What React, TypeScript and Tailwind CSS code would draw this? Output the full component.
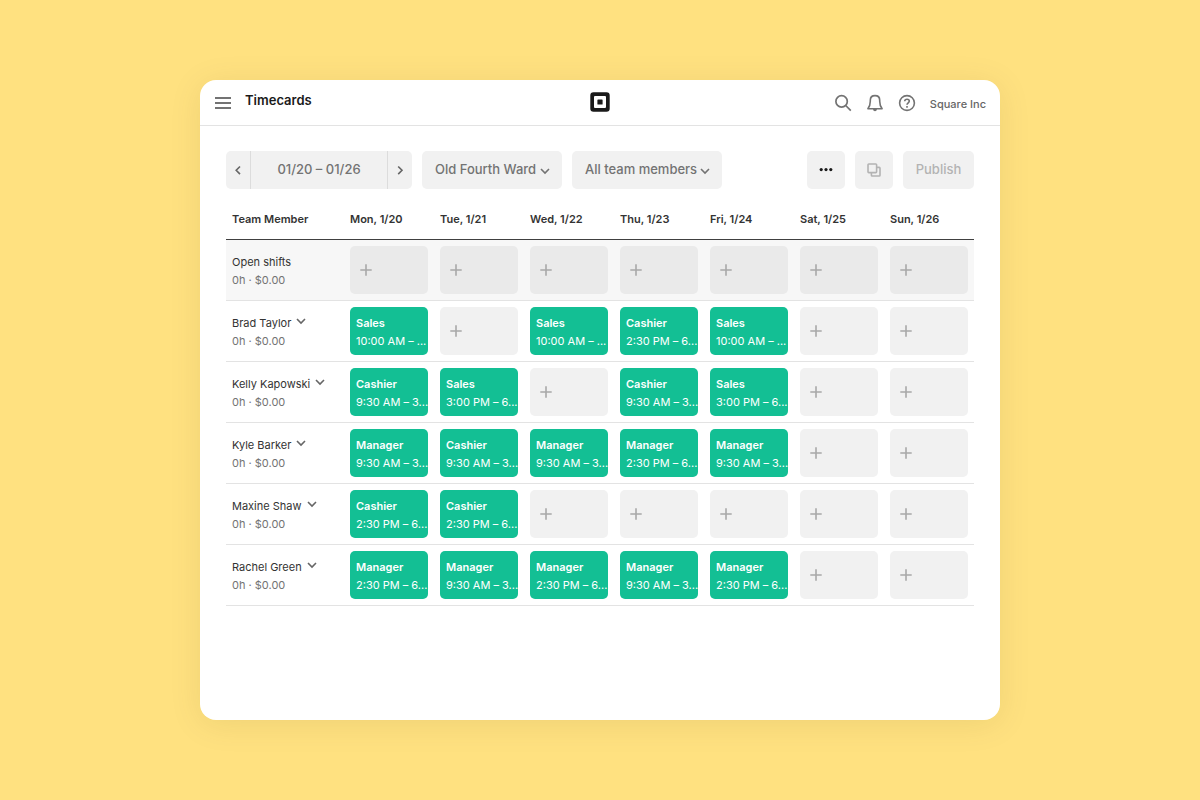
import type { ReactNode } from 'react';

type Cell = [role: string, time: string] | null;

const days = ['Mon, 1/20', 'Tue, 1/21', 'Wed, 1/22', 'Thu, 1/23', 'Fri, 1/24', 'Sat, 1/25', 'Sun, 1/26'];

const ten = '10:00 AM – ...';
const nineThirty = '9:30 AM – 3...';
const twoThirty = '2:30 PM – 6...';
const three = '3:00 PM – 6...';

const members: { name: string; cells: Cell[] }[] = [
  { name: 'Brad Taylor', cells: [['Sales', ten], null, ['Sales', ten], ['Cashier', twoThirty], ['Sales', ten], null, null] },
  { name: 'Kelly Kapowski', cells: [['Cashier', nineThirty], ['Sales', three], null, ['Cashier', nineThirty], ['Sales', three], null, null] },
  { name: 'Kyle Barker', cells: [['Manager', nineThirty], ['Cashier', nineThirty], ['Manager', nineThirty], ['Manager', twoThirty], ['Manager', nineThirty], null, null] },
  { name: 'Maxine Shaw', cells: [['Cashier', twoThirty], ['Cashier', twoThirty], null, null, null, null, null] },
  { name: 'Rachel Green', cells: [['Manager', twoThirty], ['Manager', nineThirty], ['Manager', twoThirty], ['Manager', nineThirty], ['Manager', twoThirty], null, null] },
];

function Chevron({ className, d = 'M1 3 L5 7 L9 3' }: { className?: string; d?: string }) {
  return (
    <svg viewBox="0 0 10 10" className={className} fill="none" stroke="currentColor" strokeWidth="1.6" aria-hidden="true">
      <path d={d} />
    </svg>
  );
}

function Dropdown({ label, value, width }: { label: string; value: string; width: string }) {
  return (
    <div className={`relative ${width}`}>
      <select
        aria-label={label}
        className="h-[38px] w-full appearance-none rounded-[5px] bg-[#f1f1f1] pr-6 pl-[13px] text-[13px] font-medium text-[#737373]"
      >
        <option>{value}</option>
      </select>
      <Chevron className="pointer-events-none absolute top-[15px] right-3 size-[10px] text-[#737373]" />
    </div>
  );
}

function AddShift({ label, tone }: { label: string; tone: string }) {
  return (
    <button type="button" aria-label={label} className={`flex h-12 w-full items-center rounded-[5px] pl-[10px] ${tone}`}>
      <svg viewBox="0 0 12 12" className="size-3" stroke="#a8a8a8" strokeWidth="1.6" aria-hidden="true">
        <path d="M6 .3V11.7M.3 6H11.7" />
      </svg>
    </button>
  );
}

function Shift({ role, time }: { role: string; time: string }) {
  return (
    <button type="button" className="block h-12 w-full overflow-hidden rounded-[5px] bg-[#13bf94] pt-[2px] pl-[6px] text-left text-white">
      <span className="block text-[11px] leading-[18px] font-semibold">{role}</span>
      <span className="block text-[11px] leading-[18px] whitespace-nowrap">{time}</span>
    </button>
  );
}

function IconButton({ label, children }: { label: string; children: ReactNode }) {
  return (
    <button type="button" aria-label={label} className="flex size-[18px] items-center justify-center text-[#737373]">
      {children}
    </button>
  );
}

export default function App() {
  return (
    <div className="flex min-h-screen justify-center bg-[#ffe180] py-20 font-['Inter',sans-serif]">
      <div className="w-full max-w-[800px] rounded-2xl bg-white shadow-[0_4px_32px_rgba(90,80,20,0.10)]">
        <header className="grid h-[46px] grid-cols-[1fr_auto_1fr] items-center border-b border-[#e3e3e3] px-[14px]">
          <div className="flex items-center gap-[13px]">
            <IconButton label="Menu">
              <svg viewBox="0 0 18 18" className="size-[18px]" stroke="currentColor" strokeWidth="1.8" aria-hidden="true">
                <path d="M1 4H17M1 9H17M1 14H17" />
              </svg>
            </IconButton>
            <h1 className="pb-[6px] text-[13px] leading-[18px] font-semibold text-[#1a1a1a]">Timecards</h1>
          </div>
          <div className="pb-[2px]">
            <svg viewBox="0 0 20 20" className="size-5" role="img" aria-label="Square">
              <path
                fillRule="evenodd"
                fill="#1a1a1a"
                d="M3.5 .3H16.5Q19.7 .3 19.7 3.5V16.5Q19.7 19.7 16.5 19.7H3.5Q.3 19.7 .3 16.5V3.5Q.3 .3 3.5 .3ZM5 4Q4 4 4 5V15Q4 16 5 16H15Q16 16 16 15V5Q16 4 15 4Z"
              />
              <rect x="7.4" y="7.4" width="5.2" height="5.2" rx=".7" fill="#1a1a1a" />
            </svg>
          </div>
          <div className="flex items-center justify-end gap-[14px]">
            <IconButton label="Search">
              <svg viewBox="0 0 18 18" className="size-[18px]" fill="none" stroke="currentColor" strokeWidth="1.7" aria-hidden="true">
                <circle cx="7.6" cy="7.4" r="5.7" />
                <path d="M11.7 11.5L16.8 16.6" />
              </svg>
            </IconButton>
            <IconButton label="Notifications">
              <svg viewBox="0 0 18 18" className="size-[18px]" fill="none" stroke="currentColor" strokeWidth="1.6" aria-hidden="true">
                <path d="M1.9 14.7C3.7 12.4 4.3 10.4 4.3 7.2V6.2C4.3 3.4 6.2 1.6 9 1.6S13.7 3.4 13.7 6.2V7.2C13.7 10.4 14.3 12.4 16.1 14.7Z" strokeLinejoin="round" />
                <path d="M7 15H11Q10.8 17.2 9 17.2T7 15Z" fill="currentColor" stroke="none" />
              </svg>
            </IconButton>
            <IconButton label="Help">
              <svg viewBox="0 0 18 18" className="size-[18px]" fill="none" stroke="currentColor" strokeWidth="1.6" aria-hidden="true">
                <circle cx="9" cy="9" r="7.4" />
                <path d="M6.7 7.3C6.8 5.8 7.7 5.2 9 5.2C10.4 5.2 11.3 6 11.3 7.1C11.3 8.8 9 8.8 9 10.8" />
                <path d="M9 12V13.7" />
              </svg>
            </IconButton>
            <span className="pt-[2px] text-[11px] leading-4 font-medium text-[#666]">Square Inc</span>
          </div>
        </header>

        <main className="px-[26px] pt-[25px]">
          <div className="flex items-center gap-[10px]">
            <div className="flex h-[38px] w-[186px] overflow-hidden rounded-[5px] bg-[#f1f1f1] text-[#666]">
              <button type="button" aria-label="Previous week" className="flex w-[25px] items-center justify-center border-r border-[#dcdcdc]">
                <Chevron className="size-[10px]" d="M7 1.5L3.2 5.3L7 9.1" />
              </button>
              <button type="button" className="flex-1 text-[13px] font-medium text-[#737373]">
                01/20 – 01/26
              </button>
              <button type="button" aria-label="Next week" className="flex w-[25px] items-center justify-center border-l border-[#dcdcdc]">
                <Chevron className="size-[10px]" d="M3.2 1.5L7 5.3L3.2 9.1" />
              </button>
            </div>
            <Dropdown label="Location" value="Old Fourth Ward" width="w-[140px]" />
            <Dropdown label="Team members" value="All team members" width="w-[150px]" />
            <div className="flex-1" />
            <button type="button" aria-label="More" className="flex h-[38px] w-[38px] items-center justify-center rounded-[5px] bg-[#f1f1f1]">
              <svg viewBox="0 0 14 4" className="h-1 w-[14px]" fill="#1a1a1a" aria-hidden="true">
                <circle cx="2.2" cy="1.6" r="1.6" />
                <circle cx="7" cy="1.6" r="1.6" />
                <circle cx="11.8" cy="1.6" r="1.6" />
              </svg>
            </button>
            <button type="button" aria-label="Copy" className="flex h-[38px] w-[38px] items-center justify-center rounded-[5px] bg-[#f1f1f1]">
              <svg viewBox="0 0 14 14" className="size-[14px]" fill="none" stroke="#b3b3b3" strokeWidth="1.6" aria-hidden="true">
                <rect x="1" y="1" width="8.6" height="8.6" rx=".8" />
                <path d="M9.6 4.4H12.2Q13 4.4 13 5.2V12.2Q13 13 12.2 13H5.2Q4.4 13 4.4 12.2V9.6" />
              </svg>
            </button>
            <button type="button" className="h-[38px] w-[71px] rounded-[5px] bg-[#f1f1f1] text-[13px] font-medium text-[#b3b3b3]">
              Publish
            </button>
          </div>

          <table className="mt-[10px] w-full table-fixed border-collapse text-left text-[11px]">
            <thead>
              <tr className="h-10 border-b border-[#404040] text-[#333]">
                <th scope="col" className="w-[118px] pl-[6px] font-semibold">Team Member</th>
                {days.map((day) => (
                  <th scope="col" key={day} className="pl-[6px] font-semibold">{day}</th>
                ))}
              </tr>
            </thead>
            <tbody>
              <tr className="h-[61px] border-b border-[#e3e3e3] bg-[#f7f7f7]">
                <th scope="row" className="pt-[3px] pl-[6px] font-normal">
                  <div className="leading-[18px] text-[#333]">Open shifts</div>
                  <div className="leading-[18px] text-[#737373]">0h · $0.00</div>
                </th>
                {days.map((day) => (
                  <td key={day} className="px-[6px]">
                    <AddShift label={`Add open shift, ${day}`} tone="bg-[#eaeaea]" />
                  </td>
                ))}
              </tr>
              {members.map(({ name, cells }) => (
                <tr key={name} className="h-[61px] border-b border-[#e3e3e3]">
                  <th scope="row" className="pt-[3px] pl-[6px] font-normal">
                    <button type="button" className="flex items-center gap-[5px] leading-[18px] whitespace-nowrap text-[#333]">
                      {name}
                      <Chevron className="mb-1 size-[10px] text-[#666]" />
                    </button>
                    <div className="leading-[18px] text-[#737373]">0h · $0.00</div>
                  </th>
                  {cells.map((cell, i) => (
                    <td key={days[i]} className="px-[6px]">
                      {cell ? (
                        <Shift role={cell[0]} time={cell[1]} />
                      ) : (
                        <AddShift label={`Add shift for ${name}, ${days[i]}`} tone="bg-[#f1f1f1]" />
                      )}
                    </td>
                  ))}
                </tr>
              ))}
            </tbody>
          </table>
        </main>
      </div>
    </div>
  );
}
